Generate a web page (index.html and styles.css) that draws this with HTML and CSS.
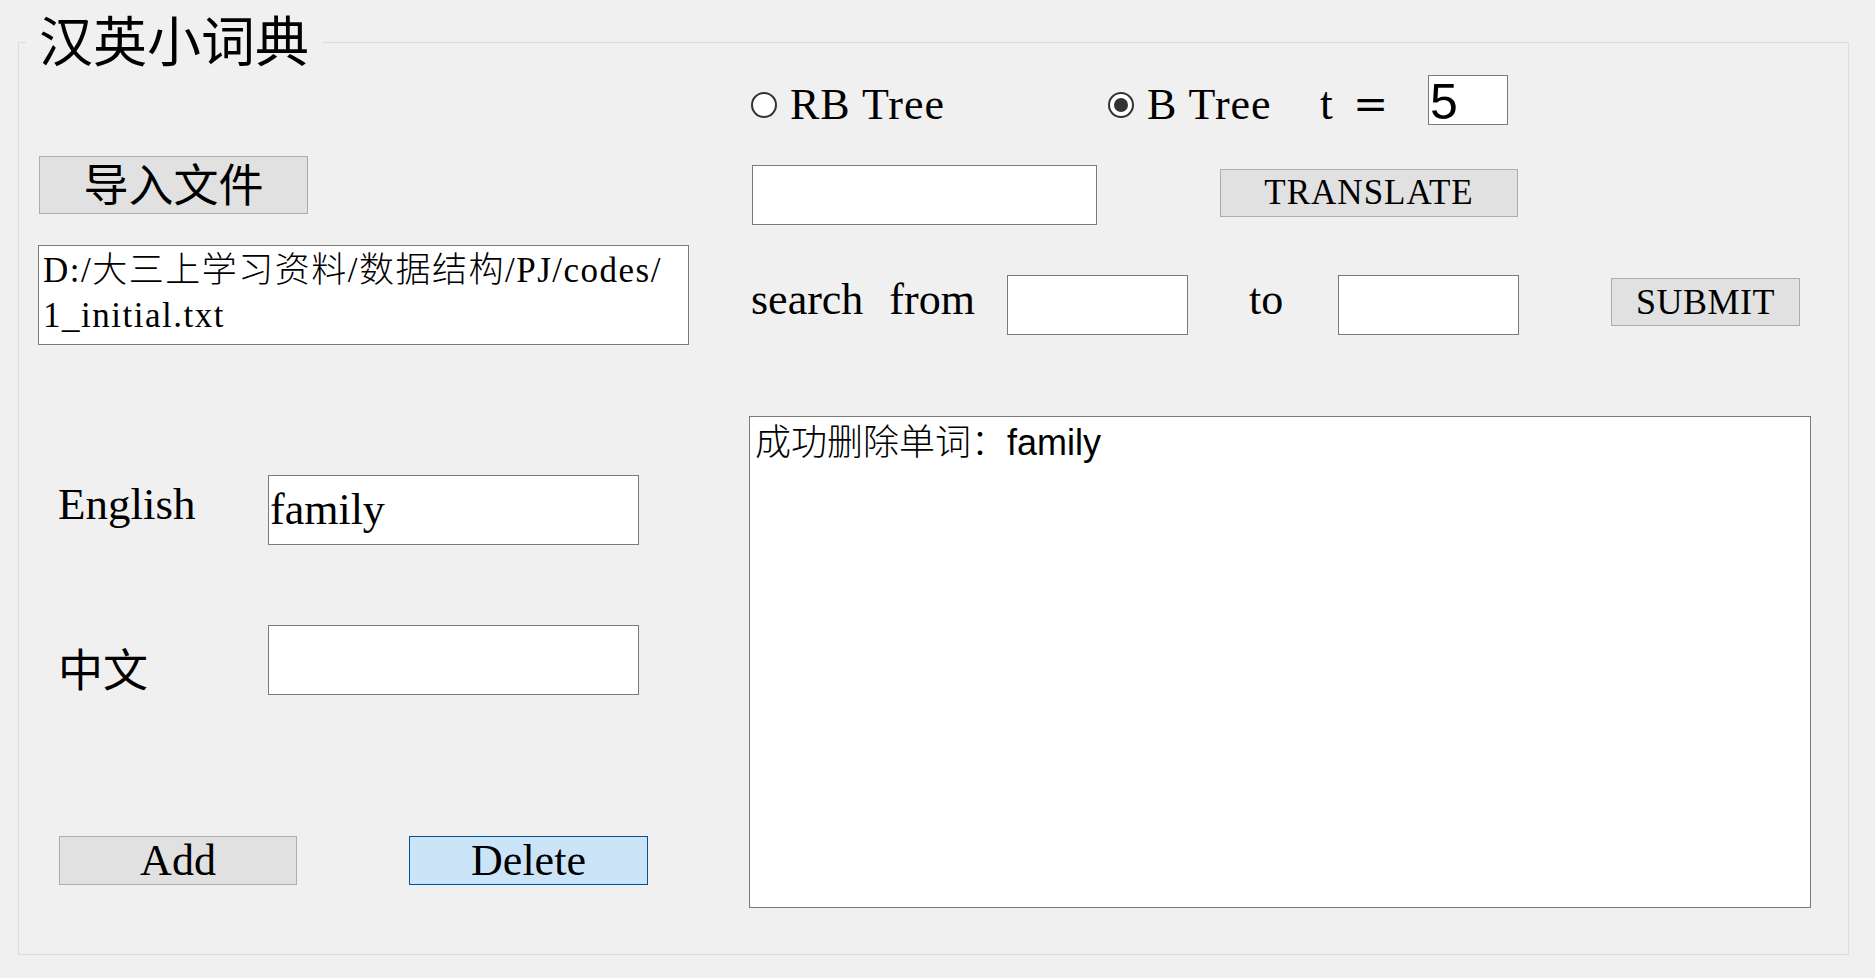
FILE: index.html
```html
<!DOCTYPE html>
<html lang="zh-CN">
<head>
<meta charset="utf-8">
<title>汉英小词典</title>
<link rel="stylesheet" href="styles.css">
</head>
<body>
<fieldset class="group">
  <legend class="group-title">汉英小词典</legend>
  <div class="layout">
    <div class="left-col">
      <button type="button" class="btn btn-import">导入文件</button>
      <div class="textbox path-box">D:/大三上学习资料/数据结构/PJ/codes/<br>1_initial.txt</div>
      <div class="form-row row-en">
        <span class="field-label label-en">English</span>
        <div class="textbox word-box">family</div>
      </div>
      <div class="form-row row-zh">
        <span class="field-label label-zh">中文</span>
        <div class="textbox word-box"></div>
      </div>
      <div class="action-row">
        <button type="button" class="btn btn-add">Add</button>
        <button type="button" class="btn btn-delete">Delete</button>
      </div>
    </div>
    <div class="right-col">
      <div class="tree-row">
        <span class="radio-dot"></span>
        <span class="radio-text radio-text-rb">RB Tree</span>
        <span class="radio-dot checked"></span>
        <span class="radio-text radio-text-b">B Tree</span>
        <span class="t-label">t</span>
        <span class="t-eq">=</span>
        <div class="textbox t-box">5</div>
      </div>
      <div class="translate-row">
        <div class="textbox translate-box"></div>
        <button type="button" class="btn btn-translate">TRANSLATE</button>
      </div>
      <div class="search-row">
        <span class="search-label">search&nbsp; from</span>
        <div class="textbox range-box"></div>
        <span class="to-label">to</span>
        <div class="textbox range-box"></div>
        <button type="button" class="btn btn-submit">SUBMIT</button>
      </div>
      <div class="textbox output-box">成功删除单词：family</div>
    </div>
  </div>
</fieldset>
</body>
</html>
```

FILE: styles.css
```css
html, body {
  margin: 0;
  padding: 0;
  background: #f0f0f0;
  overflow: hidden;
}

body {
  width: 1875px;
  height: 978px;
  color: #000;
  font-family: "Liberation Serif", "Noto Sans CJK SC", serif;
}

.group {
  box-sizing: border-box;
  width: 1831px;
  height: 946px;
  margin: 9px 0 0 18px;
  padding: 0 0 0 19px;
  border: 1px solid #dcdcdc;
  min-width: 0;
}

.group-title {
  margin-left: -12px;
  padding: 0 13px 7px;
  font-family: "Noto Sans CJK SC", sans-serif;
  font-size: 54px;
  line-height: 60px;
}

.layout {
  display: flex;
  gap: 60px;
}

.left-col {
  width: 651px;
  display: flex;
  flex-direction: column;
  align-items: flex-start;
}

.right-col {
  width: 1062px;
  display: flex;
  flex-direction: column;
  align-items: flex-start;
}

.textbox {
  box-sizing: border-box;
  background: #fff;
  border: 1px solid #7a7a7a;
}

.btn {
  box-sizing: border-box;
  margin: 0;
  padding: 0;
  background: #e1e1e1;
  border: 1px solid #adadad;
  border-radius: 0;
  color: #000;
  font-family: "Liberation Serif", serif;
  text-align: center;
}

/* left column */
.btn-import {
  width: 269px;
  height: 58px;
  margin: 80px 0 0 1px;
  padding-bottom: 5px;
  font-family: "Noto Sans CJK SC", sans-serif;
  font-size: 45px;
  line-height: 52px;
}

.path-box {
  width: 651px;
  height: 100px;
  margin-top: 31px;
  padding: 2px 4px 0;
  font-family: "Liberation Serif", "Noto Sans CJK SC", serif;
  font-weight: 300;
  font-size: 35px;
  line-height: 45px;
  letter-spacing: 1.5px;
  white-space: nowrap;
}

.form-row {
  display: flex;
  align-items: flex-start;
  height: 70px;
}

.row-en {
  margin-top: 130px;
}

.row-zh {
  margin-top: 80px;
}

.field-label {
  box-sizing: border-box;
  width: 230px;
  height: 70px;
  padding-left: 20px;
}

.label-en {
  font-size: 45px;
  line-height: 58px;
}

.label-zh {
  padding-top: 8px;
  font-family: "Noto Sans CJK SC", sans-serif;
  font-size: 45px;
  line-height: 70px;
}

.word-box {
  width: 371px;
  height: 70px;
  padding: 0 1px;
  font-size: 44px;
  line-height: 68px;
}

.action-row {
  display: flex;
  margin-top: 141px;
}

.btn-add,
.btn-delete {
  height: 49px;
  font-size: 44px;
  line-height: 47px;
}

.btn-add {
  width: 238px;
  margin-left: 21px;
}

.btn-delete {
  width: 239px;
  margin-left: 112px;
  background: #cce4f7;
  border-color: #005499;
}

/* right column */
.tree-row {
  display: flex;
  align-items: baseline;
  height: 50px;
  margin-top: -1px;
}

.radio-dot {
  box-sizing: border-box;
  width: 26px;
  height: 26px;
  flex: none;
  align-self: flex-start;
  margin-top: 17px;
  border: 2px solid #333;
  border-radius: 50%;
  background: #fff;
  display: flex;
  align-items: center;
  justify-content: center;
}

.radio-dot.checked::after {
  content: "";
  width: 14px;
  height: 14px;
  border-radius: 50%;
  background: #333;
}

.radio-dot:first-child {
  margin-left: 2px;
}

.radio-text {
  font-size: 44px;
  line-height: 50px;
  letter-spacing: 1px;
  margin-left: 13px;
}

.radio-text-rb {
  width: 318px;
}

.radio-text-b {
  width: 173px;
}

.t-label {
  width: 33px;
  font-size: 46px;
  line-height: 50px;
}

.t-eq {
  width: 75px;
  font-family: "DejaVu Serif", serif;
  font-size: 42px;
  line-height: 50px;
}

.t-box {
  width: 80px;
  height: 50px;
  padding: 2px 0 0 1px;
  font-family: "Liberation Sans", sans-serif;
  font-size: 50px;
  line-height: 48px;
}

.translate-row {
  display: flex;
  align-items: flex-start;
  margin-top: 40px;
}

.translate-box {
  width: 345px;
  height: 60px;
  margin-left: 3px;
}

.btn-translate {
  width: 298px;
  height: 48px;
  margin: 4px 0 0 123px;
  font-size: 35px;
  line-height: 46px;
  letter-spacing: 1px;
}

.search-row {
  display: flex;
  align-items: flex-start;
  margin-top: 50px;
}

.search-label,
.to-label {
  box-sizing: border-box;
  font-size: 44px;
  line-height: 50px;
}

.search-label {
  width: 256px;
  margin-left: 2px;
  word-spacing: 2px;
}

.to-label {
  width: 89px;
  margin-left: 61px;
}

.range-box {
  width: 181px;
  height: 60px;
}

.btn-submit {
  width: 189px;
  height: 48px;
  margin: 3px 0 0 92px;
  font-size: 36px;
  line-height: 46px;
  letter-spacing: 0.5px;
}

.output-box {
  width: 1062px;
  height: 492px;
  margin-top: 81px;
  padding: 6px 5px 0;
  font-family: "Liberation Sans", "Noto Sans CJK SC", sans-serif;
  font-weight: 300;
  font-size: 36px;
  line-height: 40px;
}
```
